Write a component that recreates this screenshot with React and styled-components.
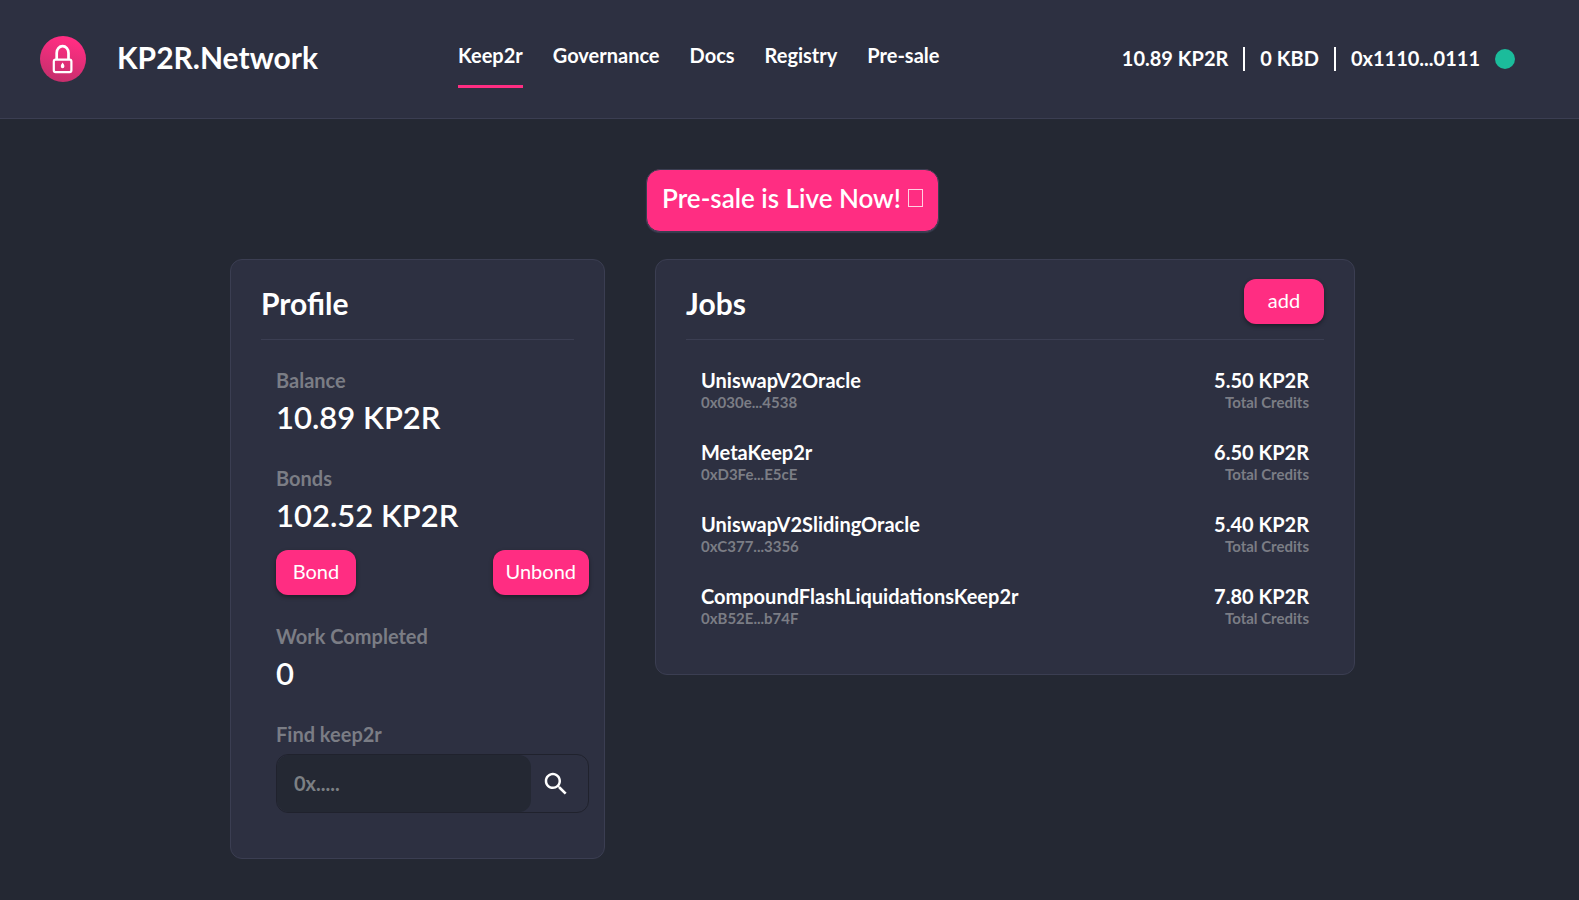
import React from "react";
import styled, { createGlobalStyle, css } from "styled-components";

const color = {
  page: "#242833",
  panel: "#2d3041",
  line: "#3b3e52",
  pink: "#ff2d82",
  muted: "#7b7d85",
  green: "#1bbc9b",
};

const GlobalStyle = createGlobalStyle`
  * { box-sizing: border-box; }
  body {
    margin: 0;
    background: ${color.page};
    color: #fff;
    font-family: Lato, "Open Sans", sans-serif;
    font-size: 20px;
    font-weight: 700;
  }
  h1, h2, h3, p, ul, dl, dd { margin: 0; padding: 0; font-weight: inherit; }
`;

const Header = styled.header`
  display: flex;
  align-items: center;
  min-height: 119px;
  padding: 0 64px 0 40px;
  background: ${color.panel};
  border-bottom: 1px solid ${color.line};
`;

const Brand = styled.div`
  display: flex;
  align-items: center;
  gap: 31px;
  width: 418px;
`;

const BrandName = styled.h1`
  padding-bottom: 5px;
  font-size: 30px;
  line-height: 40px;
`;

const Nav = styled.nav`
  display: flex;
  gap: 30px;
`;

const NavLink = styled.a`
  padding: 12px 0 17px;
  line-height: 26px;
  color: #fff;
  text-decoration: none;
  border-bottom: 3px solid ${(p) => (p.$active ? color.pink : "transparent")};
`;

const Account = styled.ul`
  display: flex;
  align-items: center;
  margin-left: auto;
  list-style: none;
`;

const AccountItem = styled.li`
  padding: 0 15px 2px;
  line-height: 22px;
  & + & { border-left: 2px solid #fff; }
`;

const StatusDot = styled.span`
  width: 20px;
  height: 20px;
  border-radius: 50%;
  background: ${color.green};
`;

const Main = styled.main`
  display: flex;
  flex-direction: column;
  align-items: center;
  gap: 27px;
  padding: 50px 0 41px 6px;
`;

const Banner = styled.button`
  display: flex;
  align-items: center;
  gap: 7px;
  height: 63px;
  padding: 0 15px 5px;
  border: 1px solid ${color.line};
  border-radius: 14px;
  background: ${color.pink};
  box-shadow: 0 1px 1px ${color.line};
  color: #fff;
  font: inherit;
  font-size: 26px;
  font-weight: 600;
`;

const MissingGlyph = styled.span`
  width: 15px;
  height: 18px;
  border: 1px solid #ffd0e2;
`;

const Columns = styled.div`
  display: grid;
  grid-template-columns: minmax(0, 375fr) minmax(0, 700fr);
  gap: 50px;
  align-items: start;
  width: 100%;
  max-width: 1125px;
`;

const Card = styled.section`
  border: 1px solid ${color.line};
  border-radius: 12px;
  background: ${color.panel};
  padding: 0 30px 45px;
`;

const CardHeader = styled.div`
  display: flex;
  justify-content: space-between;
  align-items: center;
  height: 80px;
  padding-top: 4px;
  border-bottom: 1px solid ${color.line};
`;

const CardTitle = styled.h2`
  padding-top: 2px;
  font-size: 30px;
  line-height: 40px;
`;

const Button = styled.button`
  min-width: 80px;
  height: 45px;
  padding: 0 13px 3px;
  border: 0;
  border-radius: 12px;
  background: ${color.pink};
  box-shadow: 0 2px 4px rgba(0, 0, 0, 0.4);
  color: #fff;
  font: inherit;
  font-weight: 400;
`;

const ProfileBody = styled.div`
  display: flex;
  flex-direction: column;
  gap: 24px;
  margin-right: -15px;
  padding: 25px 0 0 15px;
`;

const labelText = css`
  display: block;
  line-height: 30px;
  color: ${color.muted};
`;

const StatLabel = styled.p`${labelText}`;
const FieldLabel = styled.label`${labelText}`;

const StatValue = styled.p`
  font-size: 31px;
  font-weight: 600;
  line-height: 44px;
`;

const Actions = styled.div`
  display: flex;
  justify-content: space-between;
  margin: 13px 0 2px;
`;

const SearchBox = styled.div`
  display: flex;
  height: 59px;
  margin-top: 5px;
  border: 1px solid #20222d;
  border-radius: 12px;
`;

const SearchInput = styled.input`
  flex: 1;
  min-width: 0;
  padding: 0 17px 2px;
  border: 0;
  border-radius: 12px;
  background: ${color.page};
  color: #fff;
  font: inherit;
  outline: none;
  &::placeholder { color: #7c8084; opacity: 1; }
`;

const SearchButton = styled.button`
  display: flex;
  align-items: center;
  justify-content: center;
  width: 57px;
  padding: 0 8px 0 0;
  border: 0;
  background: none;
  color: #fff;
`;

const JobList = styled.ul`
  display: flex;
  flex-direction: column;
  gap: 28px;
  padding: 28px 15px 1px;
  list-style: none;
`;

const Job = styled.li`
  display: flex;
  justify-content: space-between;
`;

const JobCell = styled.div`
  text-align: ${(p) => (p.$end ? "right" : "left")};
`;

const JobMain = styled.p`
  line-height: 24px;
`;

const JobSub = styled.p`
  font-size: 15px;
  line-height: 20px;
  color: ${color.muted};
`;

const jobs = [
  { name: "UniswapV2Oracle", address: "0x030e...4538", credits: "5.50 KP2R" },
  { name: "MetaKeep2r", address: "0xD3Fe...E5cE", credits: "6.50 KP2R" },
  { name: "UniswapV2SlidingOracle", address: "0xC377...3356", credits: "5.40 KP2R" },
  { name: "CompoundFlashLiquidationsKeep2r", address: "0xB52E...b74F", credits: "7.80 KP2R" },
];

const pages = ["Keep2r", "Governance", "Docs", "Registry", "Pre-sale"];

function Logo() {
  return (
    <svg width="46" height="46" viewBox="0 0 46 46" aria-hidden="true">
      <defs>
        <linearGradient id="logoFill" x1="0.65" y1="0.1" x2="0.4" y2="1">
          <stop offset="0" stopColor="#ff2d82" />
          <stop offset="1" stopColor="#c52f6c" />
        </linearGradient>
      </defs>
      <circle cx="23" cy="23" r="23" fill="url(#logoFill)" />
      <g fill="none" stroke="#fff" strokeWidth="2.2">
        <rect x="13.8" y="23.7" width="17.600" height="12.400" rx="1.800" />
        <path d="M16.700 23.500v-6.600a5.900 6.700 0 0 1 11.800 0v6.600" strokeWidth="2.700" />
      </g>
      <path d="M22.600 26.400c.8 1.200 1.800 2.300 1.800 3.800a1.800 2 0 0 1-3.600 0c0-1.500 1-2.600 1.800-3.800z" fill="#fff" />
    </svg>
  );
}

function SearchIcon() {
  return (
    <svg width="30" height="30" viewBox="0 0 24 24" fill="currentColor" aria-hidden="true">
      <path d="M15.500 14h-.79l-.28-.27C15.410 12.590 16 11.110 16 9.500 16 5.910 13.090 3 9.500 3S3 5.910 3 9.500 5.910 16 9.500 16c1.610 0 3.090-.59 4.230-1.570l.27.28v.79l5 4.990L20.490 19l-4.990-5zm-6 0C7.010 14 5 11.990 5 9.500S7.010 5 9.500 5 14 7.010 14 9.500 11.990 14 9.500 14z" />
    </svg>
  );
}

function Stat({ label, value, children }) {
  return (
    <div>
      <StatLabel>{label}</StatLabel>
      <StatValue>{value}</StatValue>
      {children}
    </div>
  );
}

export default function App() {
  return (
    <>
      <GlobalStyle />
      <Header>
        <Brand>
          <Logo />
          <BrandName>KP2R.Network</BrandName>
        </Brand>
        <Nav>
          {pages.map((page, i) => (
            <NavLink key={page} href="#" $active={i === 0}>{page}</NavLink>
          ))}
        </Nav>
        <Account>
          <AccountItem>10.89 KP2R</AccountItem>
          <AccountItem>0 KBD</AccountItem>
          <AccountItem>0x1110...0111</AccountItem>
          <StatusDot as="li" />
        </Account>
      </Header>
      <Main>
        <Banner type="button">
          Pre-sale is Live Now! <MissingGlyph />
        </Banner>
        <Columns>
          <Card>
            <CardHeader>
              <CardTitle>Profile</CardTitle>
            </CardHeader>
            <ProfileBody>
              <Stat label="Balance" value="10.89 KP2R" />
              <Stat label="Bonds" value="102.52 KP2R">
                <Actions>
                  <Button type="button">Bond</Button>
                  <Button type="button">Unbond</Button>
                </Actions>
              </Stat>
              <Stat label="Work Completed" value="0" />
              <div>
                <FieldLabel htmlFor="find">Find keep2r</FieldLabel>
                <SearchBox>
                  <SearchInput id="find" type="text" placeholder="0x....." />
                  <SearchButton type="button" aria-label="Search">
                    <SearchIcon />
                  </SearchButton>
                </SearchBox>
              </div>
            </ProfileBody>
          </Card>
          <Card>
            <CardHeader>
              <CardTitle>Jobs</CardTitle>
              <Button type="button">add</Button>
            </CardHeader>
            <JobList>
              {jobs.map((job) => (
                <Job key={job.name}>
                  <JobCell>
                    <JobMain>{job.name}</JobMain>
                    <JobSub>{job.address}</JobSub>
                  </JobCell>
                  <JobCell $end>
                    <JobMain>{job.credits}</JobMain>
                    <JobSub>Total Credits</JobSub>
                  </JobCell>
                </Job>
              ))}
            </JobList>
          </Card>
        </Columns>
      </Main>
    </>
  );
}
